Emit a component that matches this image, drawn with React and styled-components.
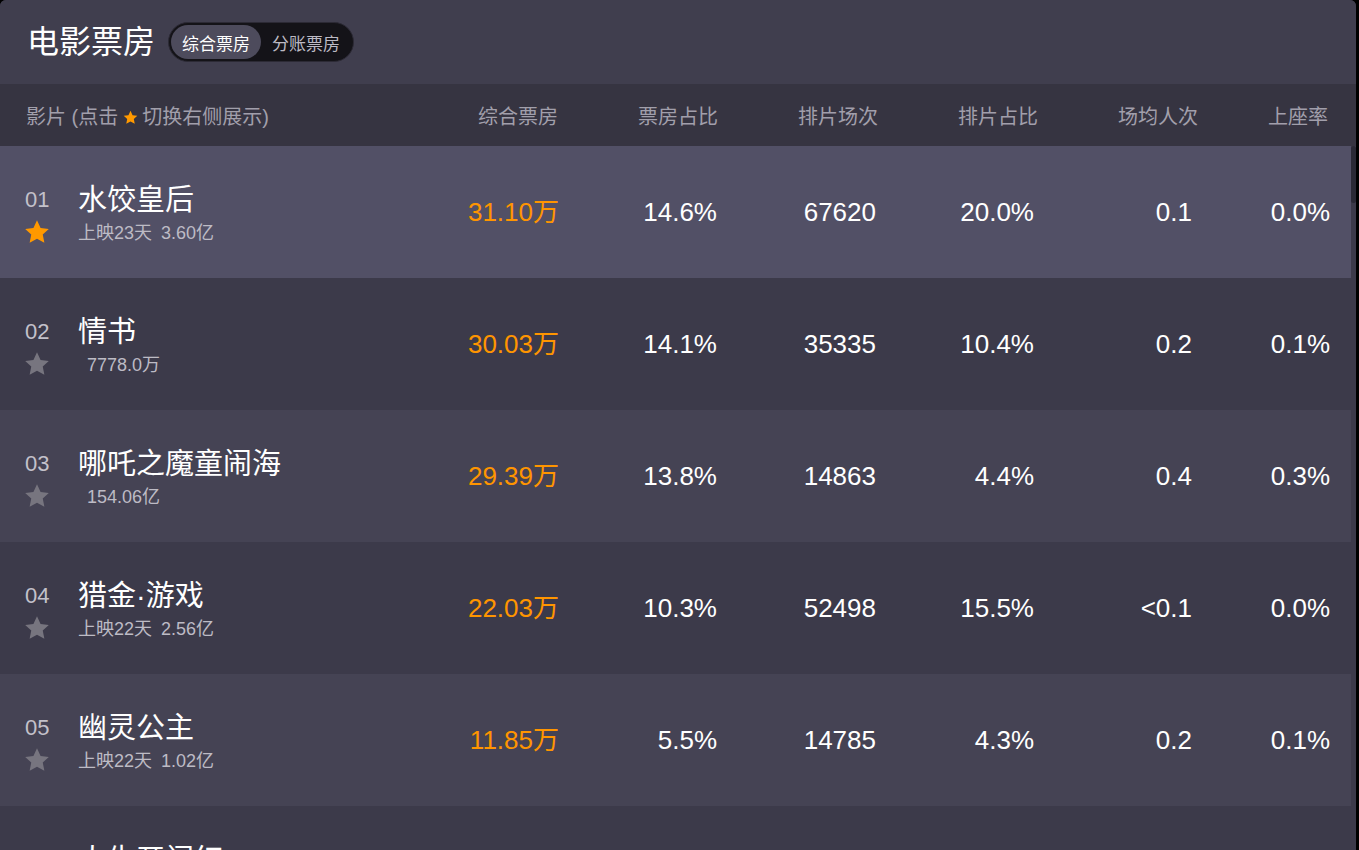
import React from 'react'
import styled, { createGlobalStyle } from 'styled-components'

const GlobalStyle = createGlobalStyle`
  html, body {
    margin: 0;
    padding: 0;
    background: #000;
    height: 100%;
    overflow: hidden;
  }
  body {
    font-family: "Liberation Sans", "Noto Sans CJK SC", sans-serif;
  }
`

const Panel = styled.div`
  width: 1356px;
  height: 850px;
  background: #3c3a4a;
  border-radius: 6px 6px 0 0;
  overflow: hidden;
  display: flex;
  flex-direction: column;
`
const TopBar = styled.div`
  height: 84px;
  flex: none;
  background: #403e4e;
  display: flex;
  align-items: center;
  padding-left: 27px;
  gap: 13px;
`
const Title = styled.h1`
  margin: 0;
  font-size: 32px;
  font-weight: 400;
  line-height: 40px;
  color: #fff;
`
const Toggle = styled.div`
  display: flex;
  align-items: center;
  height: 40px;
  padding: 0 2px;
  box-sizing: border-box;
  border-radius: 20px;
  background: #141318;
  border: 1px solid #2c2a35;
`
const ToggleItem = styled.div`
  height: 34px;
  padding: 0 11px;
  display: flex;
  align-items: center;
  border-radius: 17px;
  font-size: 17px;
  color: ${p => (p.$active ? '#fff' : '#bcbac4')};
  background: ${p => (p.$active ? '#4d4b5c' : 'transparent')};
`
const HeadRow = styled.div`
  height: 62px;
  flex: none;
  background: #363441;
  display: grid;
  grid-template-columns: 1fr 160px 160px 160px 160px 160px 130px;
  align-items: center;
  padding: 0 28px 0 26px;
  font-size: 20px;
  color: #a19fab;
`
const HeadCell = styled.div`
  text-align: ${p => (p.$left ? 'left' : 'right')};
  white-space: nowrap;
`
const HeadStar = styled.span`
  display: inline-block;
  margin: 0 4px 0 5px;
  vertical-align: -1px;
`
const Body = styled.div`
  flex: 1;
  display: flex;
  min-height: 0;
`
const List = styled.div`
  flex: 1;
  overflow: hidden;
`
const Track = styled.div`
  width: 5px;
  flex: none;
`
const Thumb = styled.div`
  width: 5px;
  height: 57px;
  border-radius: 3px;
  background: #2a2935;
`
const Row = styled.div`
  height: 132px;
  display: grid;
  grid-template-columns: 1fr 160px 160px 160px 160px 160px 130px;
  align-items: center;
  padding: 0 23px 0 25px;
  background: ${p => (p.$active ? '#525066' : p.$odd ? '#454354' : '#3c3a4a')};
`
const MovieCell = styled.div`
  display: flex;
  align-items: center;
  padding-top: 6px;
`
const Rank = styled.div`
  width: 53px;
  flex: none;
  display: flex;
  flex-direction: column;
  align-items: flex-start;
`
const RankNo = styled.div`
  font-size: 22px;
  line-height: 34px;
  color: #c3c1ca;
`
const StarBox = styled.div`
  height: 30px;
  margin-left: -1px;
  display: flex;
  align-items: center;
`
const MovieName = styled.div`
  font-size: 29px;
  line-height: 36px;
  color: #fff;
  white-space: nowrap;
`
const MovieSub = styled.div`
  font-size: 18px;
  line-height: 30px;
  color: #bdbbc5;
  white-space: nowrap;
`
const SubSum = styled.span`
  margin-left: 9px;
`
const Value = styled.div`
  text-align: right;
  font-size: 26px;
  line-height: 30px;
  color: ${p => (p.$hot ? '#ff9500' : '#fff')};
  margin-right: ${p => p.$pad || 0}px;
`

const Star = ({ size = 24, color }) => (
  <svg width={size} height={size} viewBox="0 0 24 24">
    <path
      d="M12 1.2l3.3 7.1 7.6.9-5.6 5.2 1.5 7.6L12 18.2l-6.8 3.8 1.5-7.6-5.6-5.2 7.6-.9z"
      fill={color}
    />
  </svg>
)

const movies = [
  { no: '01', name: '水饺皇后', days: '上映23天', sum: '3.60亿', box: '31.10万', rate: '14.6%', shows: '67620', showRate: '20.0%', avg: '0.1', seat: '0.0%', active: true },
  { no: '02', name: '情书', days: '', sum: '7778.0万', box: '30.03万', rate: '14.1%', shows: '35335', showRate: '10.4%', avg: '0.2', seat: '0.1%' },
  { no: '03', name: '哪吒之魔童闹海', days: '', sum: '154.06亿', box: '29.39万', rate: '13.8%', shows: '14863', showRate: '4.4%', avg: '0.4', seat: '0.3%' },
  { no: '04', name: '猎金·游戏', days: '上映22天', sum: '2.56亿', box: '22.03万', rate: '10.3%', shows: '52498', showRate: '15.5%', avg: '<0.1', seat: '0.0%' },
  { no: '05', name: '幽灵公主', days: '上映22天', sum: '1.02亿', box: '11.85万', rate: '5.5%', shows: '14785', showRate: '4.3%', avg: '0.2', seat: '0.1%' },
  { no: '06', name: '人生开门红', days: '上映23天', sum: '1.15亿', box: '9.62万', rate: '4.5%', shows: '30512', showRate: '9.0%', avg: '0.1', seat: '0.1%' },
]

const MovieRow = ({ m, odd }) => (
  <Row $active={m.active} $odd={odd}>
    <MovieCell>
      <Rank>
        <RankNo>{m.no}</RankNo>
        <StarBox>
          <Star size={26} color={m.active ? '#ff9900' : '#77757f'} />
        </StarBox>
      </Rank>
      <div>
        <MovieName>{m.name}</MovieName>
        <MovieSub>
          {m.days}
          <SubSum>{m.sum}</SubSum>
        </MovieSub>
      </div>
    </MovieCell>
    <Value $hot $pad={-1}>{m.box}</Value>
    <Value $pad={1}>{m.rate}</Value>
    <Value $pad={2}>{m.shows}</Value>
    <Value $pad={4}>{m.showRate}</Value>
    <Value $pad={6}>{m.avg}</Value>
    <Value $pad={-2}>{m.seat}</Value>
  </Row>
)

export default function App() {
  return (
    <>
      <GlobalStyle />
      <Panel>
        <TopBar>
          <Title>{'电影票房'}</Title>
          <Toggle>
            <ToggleItem $active>{'综合票房'}</ToggleItem>
            <ToggleItem>{'分账票房'}</ToggleItem>
          </Toggle>
        </TopBar>
        <HeadRow>
          <HeadCell $left>
            {'影片 (点击'}
            <HeadStar>
              <Star size={15} color="#ff9900" />
            </HeadStar>
            {'切换右侧展示)'}
          </HeadCell>
          <HeadCell>{'综合票房'}</HeadCell>
          <HeadCell>{'票房占比'}</HeadCell>
          <HeadCell>{'排片场次'}</HeadCell>
          <HeadCell>{'排片占比'}</HeadCell>
          <HeadCell>{'场均人次'}</HeadCell>
          <HeadCell>{'上座率'}</HeadCell>
        </HeadRow>
        <Body>
          <List>
            {movies.map((m, i) => (
              <MovieRow key={m.no} m={m} odd={i % 2 === 0 && !m.active} />
            ))}
          </List>
          <Track>
            <Thumb />
          </Track>
        </Body>
      </Panel>
    </>
  )
}
